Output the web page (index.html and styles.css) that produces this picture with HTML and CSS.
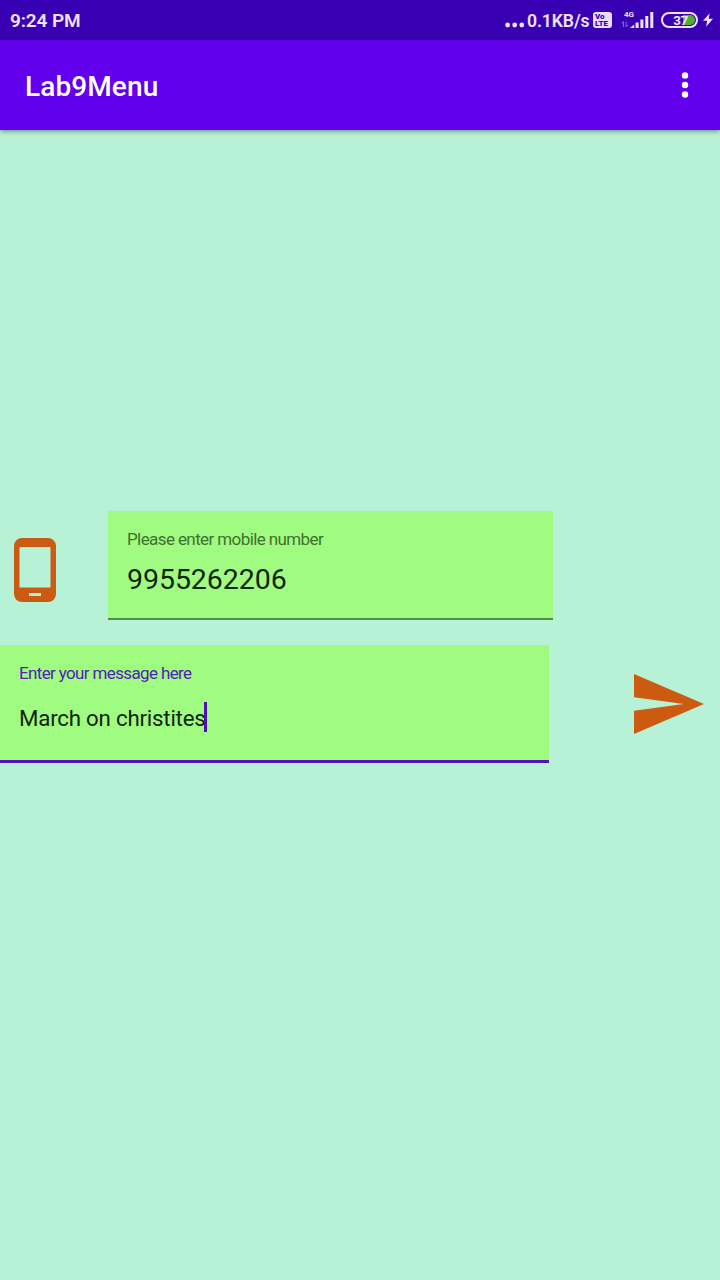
FILE: index.html
```html
<!DOCTYPE html>
<html lang="en">
<head>
<meta charset="utf-8">
<title>Lab9Menu</title>
<link rel="stylesheet" href="styles.css">
</head>
<body>
<div class="screen">
  <div class="status-bar">
    <span class="clock">9:24 PM</span>
    <svg class="dots" width="20" height="6" viewBox="0 0 20 6"><circle cx="2.6" cy="3" r="2.4"/><circle cx="9.7" cy="3" r="2.4"/><circle cx="16.8" cy="3" r="2.4"/></svg>
    <span class="speed">0.1KB/s</span>
    <span class="volte"><span>Vo</span><span>LTE</span></span>
    <span class="network">
      <span class="generation">4G</span>
      <svg class="signal" width="34" height="17" viewBox="0 0 34 17">
        <path class="faint" d="M.5 11.5L2.5 9.5V15M5 9.5V15l2-2"/>
        <path d="M9 16l4.2-3.5V16zM14.6 10.5h3V16h-3zM19.4 7.5h3V16h-3zM24.3 4h3v12h-3zM29.3 0h3v16h-3z"/>
      </svg>
    </span>
    <span class="battery"><span class="level">37</span></span>
    <svg class="bolt" width="10" height="16" viewBox="0 0 12 16"><path d="M8 0L0 9h5L3.7 16 12 6.5H6.8z"/></svg>
  </div>
  <header class="app-bar">
    <h1 class="title">Lab9Menu</h1>
    <svg class="menu" width="8" height="28" viewBox="0 0 8 28"><circle cx="4" cy="4.5" r="3.2"/><circle cx="4" cy="14" r="3.2"/><circle cx="4" cy="23.5" r="3.2"/></svg>
  </header>
  <main class="content">
    <div class="row number-row">
      <svg class="phone" width="42" height="64" viewBox="0 0 42 64"><path fill-rule="evenodd" d="M8 0h26a8 8 0 0 1 8 8v48a8 8 0 0 1-8 8H8a8 8 0 0 1-8-8V8a8 8 0 0 1 8-8zM5.5 9v40.5h31V9zM15 55v3h12v-3z"/></svg>
      <div class="field number-field">
        <div class="label"><span class="number-label">Please enter mobile number</span></div>
        <div class="value">9955262206</div>
      </div>
    </div>
    <div class="row message-row">
      <div class="field message-field">
        <div class="label"><span class="message-label">Enter your message here</span></div>
        <div class="value"><span class="message-text">March on christites</span><span class="caret"></span></div>
      </div>
      <svg class="send" width="70" height="60" viewBox="0 0 70 60"><path d="M0 0L70 30 0 60V36.7L50 30 0 23.3z"/></svg>
    </div>
  </main>
</div>
</body>
</html>
```
FILE: styles.css
```css
* { box-sizing: border-box; }
body { margin: 0; font-family: Roboto, sans-serif; background: #b7f1d6; }
svg { display: block; flex: none; }
.screen { width: 720px; height: 1280px; overflow: hidden; display: flex; flex-direction: column; background: #b7f1d6; }

.status-bar { height: 40px; flex: none; display: flex; align-items: center; padding: 0 6px 0 10px; background: #3900b3; color: #f0e2ff; fill: #f0e2ff; font-weight: 600; white-space: nowrap; }
.clock { font-size: 19px; line-height: 40px; margin-top: 2px; letter-spacing: -.1px; }
.dots { margin: 9px 2px 0 auto; }
.speed { width: 64px; font-size: 17.6px; line-height: 40px; margin-top: 2px; letter-spacing: -.1px; }
.volte { width: 19px; height: 16px; margin-left: 2px; border-radius: 3px; background: #eadcff; color: #3900b3; display: flex; flex-direction: column; font-size: 8px; line-height: 7px; font-weight: 900; padding: 1px 0 0 2px; }
.network { width: 34px; height: 20px; margin-left: 9px; position: relative; display: flex; align-items: flex-end; }
.generation { position: absolute; left: 3px; top: 0; font-size: 8px; line-height: 9px; font-weight: 700; }
.signal { margin-bottom: 1px; }
.faint { fill: none; stroke: #8967d4; stroke-width: 1; }
.battery { width: 37px; height: 16px; margin-left: 6px; padding: 1px; border: 2px solid #f0e2ff; border-radius: 8px; display: flex; }
.level { flex: 1; border-radius: 5px; background: linear-gradient(90deg, transparent 60%, #4fae35 60%); font-size: 13.5px; line-height: 11px; font-weight: 700; text-align: center; padding-left: 2px; letter-spacing: -.4px; }
.bolt { margin: 0 1px 0 5px; }

.app-bar { height: 90px; flex: none; display: flex; align-items: center; justify-content: space-between; padding: 0 31px 0 25px; background: #6200ee; color: #fff; fill: #fff; box-shadow: 0 1px 5px rgba(0, 0, 0, .45); }
.title { margin: 3px 0 0; font-size: 28px; line-height: 36px; font-weight: 500; letter-spacing: .1px; }

.content { flex: 1; padding-top: 381px; display: flex; flex-direction: column; gap: 25px; }
.row { display: flex; }
.field { background: #a0fc80; color: #10240b; }
.phone { margin: 27px 52px 0 14px; fill: #cb5a12; }
.number-field { width: 445px; height: 109px; padding: 17px 19px 0; border-bottom: 2px solid #4f9142; }
.label { font-size: 17px; line-height: 22px; white-space: nowrap; }
.number-label { color: #40702e; letter-spacing: -.6px; }
.number-field .value { font-size: 28.5px; line-height: 38px; margin-top: 11px; letter-spacing: -.05px; }
.message-field { width: 549px; height: 118px; padding: 17px 19px 0; border-bottom: 3px solid #5015b4; }
.message-label { color: #5220b6; letter-spacing: -.64px; }
.message-field .value { display: flex; align-items: center; height: 30px; margin-top: 18px; font-size: 22.3px; line-height: 30px; white-space: nowrap; }
.message-text { width: 185px; padding-top: 1px; letter-spacing: -.22px; }
.caret { width: 3px; height: 30px; background: #5010b8; }
.send { margin: 29px 0 0 85px; fill: #cc5a10; }
```
